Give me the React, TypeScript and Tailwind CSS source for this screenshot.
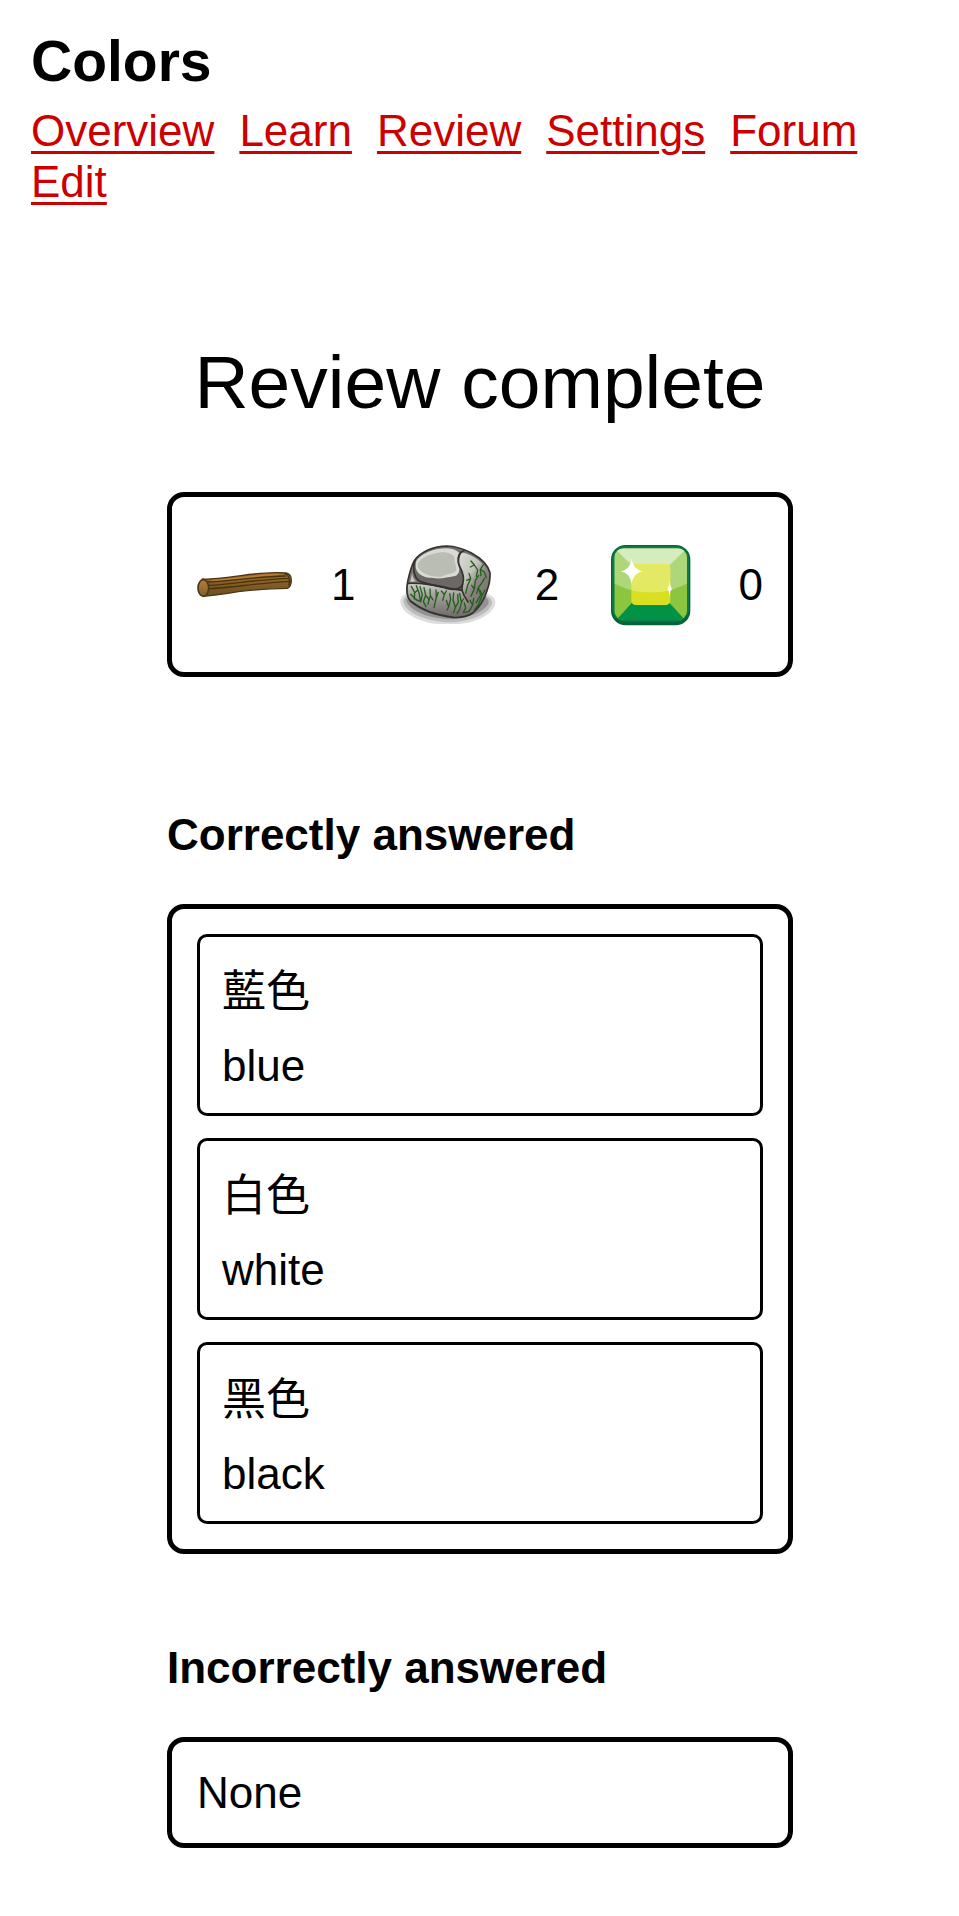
const navLinks = ["Overview", "Learn", "Review", "Settings", "Forum", "Edit"];

const correctWords = [
  { word: "藍色", meaning: "blue" },
  { word: "白色", meaning: "white" },
  { word: "黑色", meaning: "black" },
];

function LogIcon() {
  return (
    <svg className="size-[95px] shrink-0" viewBox="111 171 285 285" aria-hidden="true">
      <defs>
        <linearGradient id="log-side" x1="0" y1="0" x2="0" y2="1">
          <stop offset="0" stopColor="#a8732d" />
          <stop offset="0.45" stopColor="#856024" />
          <stop offset="1" stopColor="#6a4e1d" />
        </linearGradient>
        <linearGradient id="log-end" x1="0" y1="0" x2="0" y2="1">
          <stop offset="0" stopColor="#b57f38" />
          <stop offset="1" stopColor="#80602a" />
        </linearGradient>
      </defs>
      <path
        d="M127 297C165 299 240 286 300 280C330 278 360 277 378 279C389 281 394 289 394 301C394 314 390 322 382 325C340 325 285 329 235 335C200 341 160 347 130 349Z"
        fill="url(#log-side)"
        stroke="#4c3718"
        strokeWidth="4"
        strokeLinejoin="round"
      />
      <g fill="none" stroke="#49320f" strokeWidth="4" strokeLinecap="round">
        <path d="M143 306C200 306 270 291 376 288" />
        <path d="M147 316C210 314 280 299 386 295" />
        <path d="M147 326C210 324 300 308 390 304" />
        <path d="M374 281C387 285 391 298 387 316" />
      </g>
      <path d="M155 301C210 299 280 287 355 283" fill="none" stroke="#bd8138" strokeWidth="3" />
      <ellipse cx="130" cy="324" rx="16" ry="25" fill="url(#log-end)" stroke="#4c3718" strokeWidth="5" />
    </svg>
  );
}

function StoneIcon() {
  return (
    <svg className="size-[95px] shrink-0 overflow-visible" viewBox="32 21 285 285" aria-hidden="true">
      <defs>
        <linearGradient id="stone-front" x1="0" y1="0" x2="0" y2="1">
          <stop offset="0" stopColor="#cfcfca" />
          <stop offset="0.35" stopColor="#a3a09d" />
          <stop offset="1" stopColor="#6f6b68" />
        </linearGradient>
        <linearGradient id="stone-side" x1="0" y1="0" x2="0.7" y2="1">
          <stop offset="0" stopColor="#dcddd6" />
          <stop offset="0.4" stopColor="#c3c4bd" />
          <stop offset="0.6" stopColor="#8b8783" />
          <stop offset="1" stopColor="#6f6b68" />
        </linearGradient>
      </defs>
      <path d="M30 215C30 196 48 187 78 183L270 186C300 191 315 202 315 217C314 246 270 277 205 282H140C80 275 32 247 30 215Z" fill="#dddddd" />
      <path d="M39 213C40 198 60 190 90 188L260 190C292 195 306 206 305 219C300 247 255 271 190 277C110 278 42 248 39 213Z" fill="#bcbcbc" />
      <path d="M47 208L270 196C290 201 298 210 294 222C278 246 240 263 190 268C110 268 52 240 47 208Z" fill="#929292" />
      <path
        d="M72 92C90 66 130 48 170 48C195 49 220 57 242 68C268 82 292 102 299 128C300 148 296 166 290 182C282 208 268 232 246 250C228 261 208 264 188 262C145 257 95 242 60 213C48 200 48 175 52 155C57 132 63 108 72 92Z"
        fill="#77736f"
      />
      {/* front and right faces */}
      <path d="M54 160C92 160 150 168 216 181L234 214L244 250C228 260 208 262 188 260C145 255 95 240 62 211C52 198 51 178 54 160Z" fill="url(#stone-front)" />
      <path d="M213 67C245 72 281 98 297 128C298 148 294 166 288 182C280 206 266 231 244 250L234 214L216 181C223 158 214 132 207 108C204 96 206 78 213 67Z" fill="url(#stone-side)" />
      {/* cap */}
      <path
        d="M76 92C94 67 128 51 168 52C188 53 205 60 211 68C202 78 202 92 208 108C219 128 221 148 216 163C209 175 195 179 174 176C142 170 112 164 92 158C74 148 68 120 76 92Z"
        fill="#6c6865"
      />
      <path d="M76 96C92 68 135 54 170 55C188 56 202 62 206 69C199 82 199 97 206 113C209 127 202 137 190 139C170 142 148 149 124 143C98 145 78 130 76 112Z" fill="#d9dad3" />
      <path d="M82 102C92 82 119 73 150 67C174 66 193 73 193 86C191 101 202 111 197 123C186 132 170 132 153 140C132 142 115 137 102 130C91 125 81 114 82 102Z" fill="#babdb3" />
      <path d="M66 127C65 138 70 149 77 154L60 156Z" fill="#c8cac2" />
      <g fill="none" stroke="#216018" strokeWidth="4" strokeLinecap="round" strokeLinejoin="round">
        <path d="M63 169L73 188L72 207M73 188L82 181" />
        <path d="M78 167L86 188L91 216M91 216L96 194L89 170" />
        <path d="M61 193L79 210L88 213" />
        <path d="M101 173L106 196L99 215L107 230M106 196L115 207" />
        <path d="M119 177L120 197L113 222M120 197L128 210" />
        <path d="M137 180L138 203L131 233M138 203L144 187" />
        <path d="M153 183L162 194L157 211M162 194L168 183" />
        <path d="M168 211L175 231L170 240M175 231L181 207L178 191" />
        <path d="M190 189L188 211L195 232L190 248M195 232L204 217L202 193" />
        <path d="M208 190L213 218L208 239L200 250M213 218L219 207" />
        <path d="M242 93L252 105L262 120L258 139M252 105L240 111" />
        <path d="M236 130L241 146L232 166L226 190M241 146L229 151" />
        <path d="M279 104L270 118L282 126L288 143M270 118L272 137" />
        <path d="M265 136L255 151L252 177L242 199M252 177L244 166" />
        <path d="M282 145L276 157L264 172L271 195L258 218M264 172L259 190" />
        <path d="M284 180L275 197L264 225L253 239M275 197L270 182" />
        <path d="M250 205L247 225L236 244L224 247M247 225L239 211" />
        <path d="M222 219L226 234L219 247" />
      </g>
      <g fill="none" stroke="#353230" strokeWidth="5" strokeLinecap="round" strokeLinejoin="round">
        <path d="M74 91C68 110 68 136 84 151C105 164 145 168 172 176C195 181 211 176 217 163C223 145 218 127 207 107C202 91 205 75 212 67" />
        <path d="M52 160C90 158 150 167 178 175L215 181C219 195 225 205 233 216" />
        <path d="M216 163L215 181" />
        <path d="M212 67L221 62" />
        <path d="M72 92C90 66 130 48 170 48C195 49 220 57 242 68C268 82 292 102 299 128C300 148 296 166 290 182C282 208 268 232 246 250C228 261 208 264 188 262C145 257 95 242 60 213C48 200 48 175 52 155C57 132 63 108 72 92Z" />
      </g>
    </svg>
  );
}

function GemIcon() {
  return (
    <svg className="size-[95px] shrink-0" viewBox="15 21 285 285" aria-hidden="true">
      <defs>
        <clipPath id="gem-face">
          <rect x="43" y="55" width="218" height="215" rx="28" />
        </clipPath>
      </defs>
      <rect x="33" y="45" width="238" height="241" rx="44" fill="#006837" />
      <rect x="37" y="49" width="230" height="226" rx="39" fill="#107a48" />
      <g clipPath="url(#gem-face)">
        <rect x="43" y="55" width="218" height="215" fill="#8cc63f" />
        <path d="M43 55H261L206 108H98Z" fill="#c5e3a3" />
        <path d="M36 284L98 216H206L268 284Z" fill="#009245" />
        <rect x="94" y="101" width="117" height="124" rx="13" fill="#d9e021" />
        <path d="M43 55H261V160C198 197 106 197 43 160Z" fill="#fff" fillOpacity="0.3" />
      </g>
      <path d="M95 86C99 108 107 119 128 124C107 129 99 140 95 162C91 140 83 129 62 124C83 119 91 108 95 86Z" fill="#fff" />
      <path d="M209 150C210 166 212 173 217 176C212 180 210 186 209 202C208 186 206 180 201 176C206 173 208 166 209 150Z" fill="#fff" />
    </svg>
  );
}

const scores = [
  { name: "log", icon: <LogIcon />, count: 1 },
  { name: "stone", icon: <StoneIcon />, count: 2 },
  { name: "gem", icon: <GemIcon />, count: 0 },
];

export default function App() {
  return (
    <div className="min-h-screen bg-white pt-[29px] pr-[30px] pb-[68px] pl-[31px] font-['Liberation_Sans','Noto_Sans_CJK_TC',sans-serif] text-[44px] leading-[51px] text-black">
      <header>
        <h1 className="mb-3 text-[57px] leading-[64px] font-bold">Colors</h1>
        <nav className="flex flex-wrap gap-x-[25px]">
          {navLinks.map((link) => (
            <a
              key={link}
              href="#"
              className="text-[#cc0000] underline decoration-[3px] underline-offset-[5px]"
            >
              {link}
            </a>
          ))}
        </nav>
      </header>

      <main className="mx-auto mt-[131px] w-full max-w-[626px]">
        <h2 className="text-center text-[75px] leading-[88px]">Review complete</h2>

        <div className="mt-[66px] flex justify-between rounded-[17px] border-[5px] border-black px-[25px] py-10">
          {scores.map((score) => (
            <div key={score.name} className="flex items-center gap-[39px]">
              {score.icon}
              <span>{score.count}</span>
            </div>
          ))}
        </div>

        <section className="mt-[132px]">
          <h3 className="mb-[44px] font-bold">Correctly answered</h3>
          <ul className="flex flex-col gap-[22px] rounded-[17px] border-[5px] border-black p-[25px]">
            {correctWords.map((item) => (
              <li
                key={item.word}
                className="flex flex-col gap-[15px] rounded-[10px] border-[3px] border-black p-[22px]"
              >
                <span lang="zh-Hant" className="leading-[66px]">{item.word}</span>
                <span>{item.meaning}</span>
              </li>
            ))}
          </ul>
        </section>

        <section className="mt-[88px]">
          <h3 className="mb-[44px] font-bold">Incorrectly answered</h3>
          <div className="rounded-[17px] border-[5px] border-black p-[25px]">None</div>
        </section>
      </main>
    </div>
  );
}
